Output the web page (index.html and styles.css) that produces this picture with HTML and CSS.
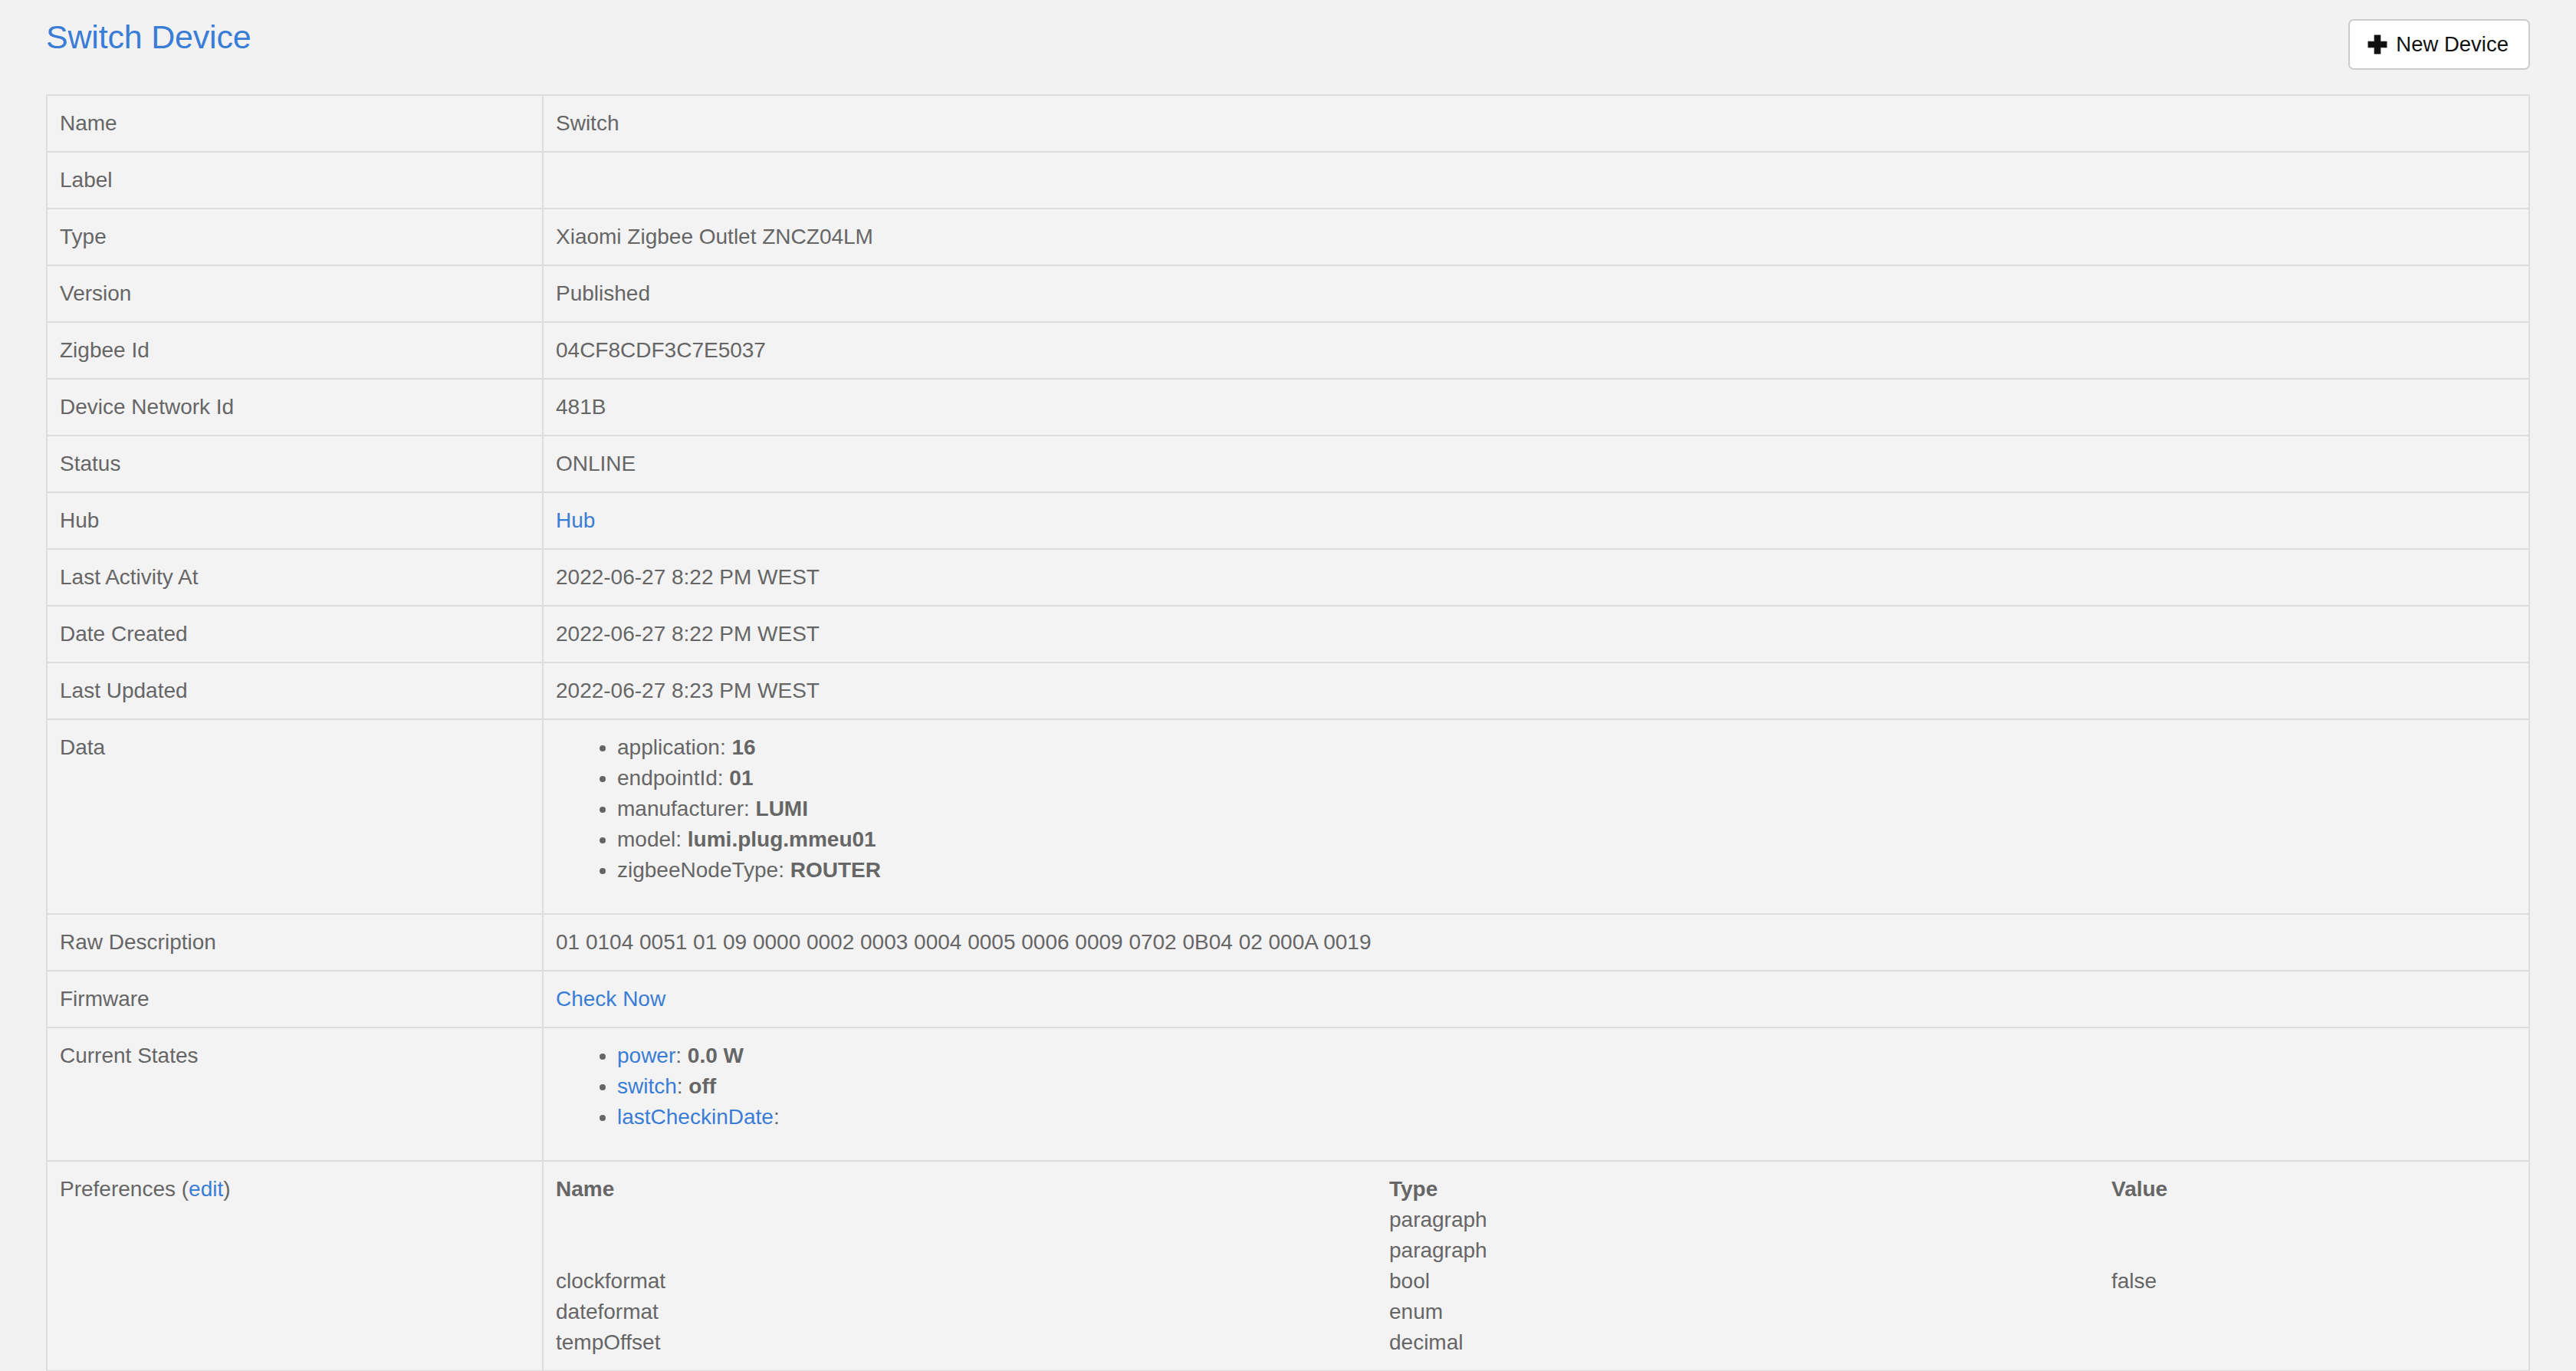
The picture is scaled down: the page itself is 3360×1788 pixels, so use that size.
FILE: index.html
```html
<!DOCTYPE html>
<html lang="en">
<head>
<meta charset="utf-8">
<title>Switch Device</title>
<link rel="stylesheet" href="styles.css">
</head>
<body>
<div class="page">
  <header class="page-header">
    <h1 class="page-title">Switch Device</h1>
    <button class="btn" type="button">
      <svg class="btn-icon" viewBox="0 0 24 24" aria-hidden="true">
        <path d="M8.5 1h7v7.5h7.5v7h-7.5v7.5h-7v-7.5h-7.5v-7h7.5z" fill="#111" stroke="#111" stroke-width="1" stroke-linejoin="round"/>
      </svg>
      <span>New Device</span>
    </button>
  </header>

  <table class="details">
    <tbody>
      <tr><td class="key">Name</td><td class="val">Switch</td></tr>
      <tr><td class="key">Label</td><td class="val"></td></tr>
      <tr><td class="key">Type</td><td class="val">Xiaomi Zigbee Outlet ZNCZ04LM</td></tr>
      <tr><td class="key">Version</td><td class="val">Published</td></tr>
      <tr><td class="key">Zigbee Id</td><td class="val">04CF8CDF3C7E5037</td></tr>
      <tr><td class="key">Device Network Id</td><td class="val">481B</td></tr>
      <tr><td class="key">Status</td><td class="val">ONLINE</td></tr>
      <tr><td class="key">Hub</td><td class="val"><a class="link" href="#">Hub</a></td></tr>
      <tr><td class="key">Last Activity At</td><td class="val">2022-06-27 8:22 PM WEST</td></tr>
      <tr><td class="key">Date Created</td><td class="val">2022-06-27 8:22 PM WEST</td></tr>
      <tr><td class="key">Last Updated</td><td class="val">2022-06-27 8:23 PM WEST</td></tr>
      <tr>
        <td class="key">Data</td>
        <td class="val">
          <ul class="list">
            <li>application: <b>16</b></li>
            <li>endpointId: <b>01</b></li>
            <li>manufacturer: <b>LUMI</b></li>
            <li>model: <b>lumi.plug.mmeu01</b></li>
            <li>zigbeeNodeType: <b>ROUTER</b></li>
          </ul>
        </td>
      </tr>
      <tr><td class="key">Raw Description</td><td class="val">01 0104 0051 01 09 0000 0002 0003 0004 0005 0006 0009 0702 0B04 02 000A 0019</td></tr>
      <tr><td class="key">Firmware</td><td class="val"><a class="link" href="#">Check Now</a></td></tr>
      <tr>
        <td class="key">Current States</td>
        <td class="val">
          <ul class="list">
            <li><a class="link" href="#">power</a>: <b>0.0 W</b></li>
            <li><a class="link" href="#">switch</a>: <b>off</b></li>
            <li><a class="link" href="#">lastCheckinDate</a>:</li>
          </ul>
        </td>
      </tr>
      <tr>
        <td class="key">Preferences (<a class="link" href="#">edit</a>)</td>
        <td class="val">
          <div class="prefs">
            <div class="prefs-head">Name</div><div class="prefs-head">Type</div><div class="prefs-head">Value</div>
            <div></div><div>paragraph</div><div></div>
            <div></div><div>paragraph</div><div></div>
            <div>clockformat</div><div>bool</div><div>false</div>
            <div>dateformat</div><div>enum</div><div></div>
            <div>tempOffset</div><div>decimal</div><div></div>
          </div>
        </td>
      </tr>
    </tbody>
  </table>
</div>
</body>
</html>
```

FILE: styles.css
```css
html, body {
  margin: 0;
  padding: 0;
  background: #f2f2f2;
}

body {
  font-family: "Liberation Sans", Arial, Helvetica, sans-serif;
  font-size: 28px;
  line-height: 40px;
  color: #666666;
}

.page {
  padding: 25px 60px 0 60px;
}

.page-header {
  display: flex;
  justify-content: space-between;
  align-items: flex-start;
  margin-bottom: 32px;
}

.page-title {
  margin: 0;
  font-size: 43px;
  line-height: 47px;
  font-weight: normal;
  color: #3a7dd6;
  letter-spacing: -0.2px;
}

.btn {
  display: flex;
  align-items: center;
  gap: 11px;
  height: 66px;
  padding: 0 26px 0 23px;
  background: #ffffff;
  border: 2px solid #cccccc;
  border-radius: 7px;
  font-family: "Liberation Sans", Arial, Helvetica, sans-serif;
  font-size: 27.5px;
  color: #111111;
}

.btn-icon {
  width: 26px;
  height: 26px;
  display: block;
}

.details {
  width: 100%;
  border-collapse: collapse;
  table-layout: fixed;
  background: #f3f3f3;
}

.details td {
  border: 2px solid #dddddd;
  padding: 16px 16px;
  vertical-align: top;
  text-align: left;
}

.details td.key {
  width: 613px;
}

.link {
  color: #3a7dd6;
  text-decoration: none;
}

b {
  font-weight: bold;
}

.list {
  margin: 0 0 20px 0;
  padding-left: 80px;
}

.list li {
  line-height: 40px;
}

.prefs {
  display: grid;
  grid-template-columns: 1087px 942px 1fr;
  grid-auto-rows: 40px;
}

.prefs-head {
  font-weight: bold;
}
```
